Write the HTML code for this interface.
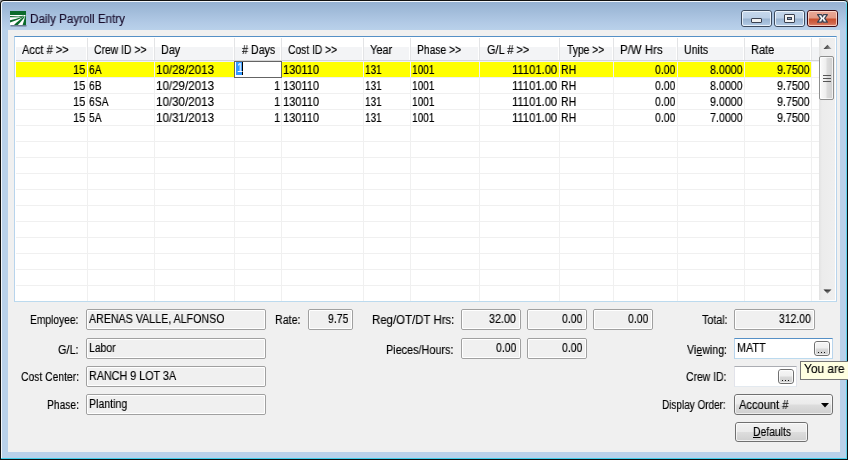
<!DOCTYPE html><html><head><meta charset="utf-8"><style>
*{margin:0;padding:0;box-sizing:border-box}
html,body{width:848px;height:460px;overflow:hidden;background:#a8a8a8}
body{position:relative;font-family:"Liberation Sans",sans-serif;font-size:12px;color:#000}
.a{position:absolute}
.t{position:absolute;white-space:nowrap;line-height:14px;transform-origin:0 0;will-change:transform;-webkit-text-stroke:0.15px currentColor}
</style></head><body>
<div class="a " style="left:0px;top:0px;width:848px;height:460px;background:#101010;border-radius:4px 4px 0 0"></div>
<div class="a " style="left:1px;top:1px;width:846px;height:458px;background:#f2f6fb;border-radius:3px 3px 0 0"></div>
<div class="a " style="left:1px;top:1px;width:846px;height:458px;border-right:1px solid #5fd3ec;border-bottom:1px solid #3fcdea;border-radius:3px 3px 0 0"></div>
<div class="a " style="left:2px;top:2px;width:844px;height:456px;background:linear-gradient(#95b1d3 0px,#a3bddb 10px,#b2cae6 21px,#b9d1ea 28px,#b9d1ea 100%);border-radius:2px 2px 0 0"></div>
<div class="a " style="left:8px;top:30px;width:832px;height:422px;background:#f0f0f0"></div>
<svg class="a" style="left:10px;top:11px" width="17" height="16" viewBox="0 0 17 16">
 <rect x="0.5" y="14" width="16" height="1.5" fill="#4a5a70" opacity=".7"/>
 <rect x="0" y="0" width="16" height="14" fill="#0b6b2b"/>
 <path d="M0 4 H15.6 L12.6 14 H0 Z" fill="#fff"/>
 <path d="M0 5 C3 5 6 5.2 8.5 5.5 L14 4.6 L13 5.4 L8.5 6.3 C6 6.4 3 6.3 0 6.2 Z" fill="#0b6b2b"/>
 <path d="M0 9.2 C4 8.4 8 7 14 4.9 L13.6 5.7 C9 8 5 10 0 11.4 Z" fill="#0b6b2b"/>
 <path d="M4 14 C7 11 10 8.5 14.4 5.2 L14.8 5.8 C12.5 9 10.5 11.5 7.8 14 Z" fill="#0b6b2b"/>
</svg>
<span id="t0" class="t" style="left:30.03px;top:12px;transform:scaleX(0.9691);color:#1a0f2e">Daily Payroll Entry</span>
<div class="a " style="left:741px;top:10px;width:31px;height:17px;border:1px solid #3c4a5e;border-radius:3px;background:linear-gradient(#c5d7eb 0,#bcd0e7 7px,#9ab4d1 8px,#a7c0dc 12px,#b8cfe9 15px)"></div>
<div class="a " style="left:742px;top:11px;width:29px;height:15px;border:1px solid rgba(245,250,255,.8);border-radius:2px"></div>
<div class="a " style="left:774px;top:10px;width:31px;height:17px;border:1px solid #3c4a5e;border-radius:3px;background:linear-gradient(#c5d7eb 0,#bcd0e7 7px,#9ab4d1 8px,#a7c0dc 12px,#b8cfe9 15px)"></div>
<div class="a " style="left:775px;top:11px;width:29px;height:15px;border:1px solid rgba(245,250,255,.8);border-radius:2px"></div>
<div class="a " style="left:807px;top:10px;width:31px;height:17px;border:1px solid #3b0a14;border-radius:3px;background:linear-gradient(#e9a998 0,#e39a86 7px,#c9502f 8px,#cf6449 12px,#e08a74 15px)"></div>
<div class="a " style="left:808px;top:11px;width:29px;height:15px;border:1px solid rgba(255,225,215,.75);border-radius:2px"></div>
<div class="a " style="left:751px;top:18px;width:11px;height:5px;background:#f0f0f0;border:1px solid #3a4150;border-radius:1px"></div>
<div class="a " style="left:784px;top:14px;width:11px;height:9px;background:#f4f4f4;border:1px solid #3a4150;border-radius:1px"></div>
<div class="a " style="left:787px;top:17px;width:5px;height:3px;background:#8aa2c0;border:1px solid #3a4150"></div>
<svg class="a" style="left:816px;top:13px" width="14" height="11" viewBox="0 0 14 11">
<path d="M1.6 1.6 H5.6 L6.5 3.9 L7.4 1.6 H11.4 L8.7 5.4 L11.4 9.2 H7.4 L6.5 6.9 L5.6 9.2 H1.6 L4.3 5.4 Z" fill="#f8f8f8" stroke="#3a4050" stroke-width="1.2" stroke-linejoin="round"/>
</svg>
<div class="a " style="left:14px;top:36px;width:823px;height:266px;background:#fff;border-top:1px solid #5590c6;border-left:1px solid #b8d4ec;border-right:1px solid #b8d4ec;border-bottom:1px solid #bcdaee"></div>
<div class="a " style="left:16px;top:37px;width:803px;height:23px;background:linear-gradient(#fff 0,#fff 10px,#f3f4f6 10px,#f3f4f6 100%)"></div>
<div class="a " style="left:16px;top:60px;width:803px;height:1px;background:#d5d5d5"></div>
<div class="a " style="left:16px;top:61px;width:803px;height:1px;background:#eef0fa"></div>
<div class="a " style="left:16px;top:62px;width:795px;height:15px;background:#ffff00"></div>
<div class="a " style="left:16px;top:77px;width:803px;height:1px;background:#f0f0f0"></div>
<div class="a " style="left:16px;top:93px;width:803px;height:1px;background:#f0f0f0"></div>
<div class="a " style="left:16px;top:109px;width:803px;height:1px;background:#f0f0f0"></div>
<div class="a " style="left:16px;top:125px;width:803px;height:1px;background:#f0f0f0"></div>
<div class="a " style="left:16px;top:141px;width:803px;height:1px;background:#f0f0f0"></div>
<div class="a " style="left:16px;top:157px;width:803px;height:1px;background:#f0f0f0"></div>
<div class="a " style="left:16px;top:173px;width:803px;height:1px;background:#f0f0f0"></div>
<div class="a " style="left:16px;top:189px;width:803px;height:1px;background:#f0f0f0"></div>
<div class="a " style="left:16px;top:205px;width:803px;height:1px;background:#f0f0f0"></div>
<div class="a " style="left:16px;top:221px;width:803px;height:1px;background:#f0f0f0"></div>
<div class="a " style="left:16px;top:237px;width:803px;height:1px;background:#f0f0f0"></div>
<div class="a " style="left:16px;top:253px;width:803px;height:1px;background:#f0f0f0"></div>
<div class="a " style="left:16px;top:269px;width:803px;height:1px;background:#f0f0f0"></div>
<div class="a " style="left:16px;top:285px;width:803px;height:1px;background:#f0f0f0"></div>
<div class="a " style="left:87px;top:62px;width:1px;height:239px;background:#f0f0f0"></div>
<div class="a " style="left:86px;top:38px;width:1px;height:22px;background:#ffffff"></div>
<div class="a " style="left:87px;top:38px;width:1px;height:22px;background:#e3e4e6"></div>
<div class="a " style="left:154px;top:62px;width:1px;height:239px;background:#f0f0f0"></div>
<div class="a " style="left:153px;top:38px;width:1px;height:22px;background:#ffffff"></div>
<div class="a " style="left:154px;top:38px;width:1px;height:22px;background:#e3e4e6"></div>
<div class="a " style="left:234px;top:62px;width:1px;height:239px;background:#f0f0f0"></div>
<div class="a " style="left:233px;top:38px;width:1px;height:22px;background:#ffffff"></div>
<div class="a " style="left:234px;top:38px;width:1px;height:22px;background:#e3e4e6"></div>
<div class="a " style="left:281px;top:62px;width:1px;height:239px;background:#f0f0f0"></div>
<div class="a " style="left:280px;top:38px;width:1px;height:22px;background:#ffffff"></div>
<div class="a " style="left:281px;top:38px;width:1px;height:22px;background:#e3e4e6"></div>
<div class="a " style="left:363px;top:62px;width:1px;height:239px;background:#f0f0f0"></div>
<div class="a " style="left:362px;top:38px;width:1px;height:22px;background:#ffffff"></div>
<div class="a " style="left:363px;top:38px;width:1px;height:22px;background:#e3e4e6"></div>
<div class="a " style="left:410px;top:62px;width:1px;height:239px;background:#f0f0f0"></div>
<div class="a " style="left:409px;top:38px;width:1px;height:22px;background:#ffffff"></div>
<div class="a " style="left:410px;top:38px;width:1px;height:22px;background:#e3e4e6"></div>
<div class="a " style="left:479px;top:62px;width:1px;height:239px;background:#f0f0f0"></div>
<div class="a " style="left:478px;top:38px;width:1px;height:22px;background:#ffffff"></div>
<div class="a " style="left:479px;top:38px;width:1px;height:22px;background:#e3e4e6"></div>
<div class="a " style="left:559px;top:62px;width:1px;height:239px;background:#f0f0f0"></div>
<div class="a " style="left:558px;top:38px;width:1px;height:22px;background:#ffffff"></div>
<div class="a " style="left:559px;top:38px;width:1px;height:22px;background:#e3e4e6"></div>
<div class="a " style="left:613px;top:62px;width:1px;height:239px;background:#f0f0f0"></div>
<div class="a " style="left:612px;top:38px;width:1px;height:22px;background:#ffffff"></div>
<div class="a " style="left:613px;top:38px;width:1px;height:22px;background:#e3e4e6"></div>
<div class="a " style="left:677px;top:62px;width:1px;height:239px;background:#f0f0f0"></div>
<div class="a " style="left:676px;top:38px;width:1px;height:22px;background:#ffffff"></div>
<div class="a " style="left:677px;top:38px;width:1px;height:22px;background:#e3e4e6"></div>
<div class="a " style="left:744px;top:62px;width:1px;height:239px;background:#f0f0f0"></div>
<div class="a " style="left:743px;top:38px;width:1px;height:22px;background:#ffffff"></div>
<div class="a " style="left:744px;top:38px;width:1px;height:22px;background:#e3e4e6"></div>
<div class="a " style="left:811px;top:62px;width:1px;height:239px;background:#f0f0f0"></div>
<div class="a " style="left:810px;top:38px;width:1px;height:22px;background:#ffffff"></div>
<div class="a " style="left:811px;top:38px;width:1px;height:22px;background:#e3e4e6"></div>
<span id="t1" class="t" style="left:22.00px;top:43px;transform:scaleX(0.9200);">Acct # &gt;&gt;</span>
<span id="t2" class="t" style="left:94.14px;top:43px;transform:scaleX(0.8644);">Crew ID &gt;&gt;</span>
<span id="t3" class="t" style="left:161.10px;top:43px;transform:scaleX(0.9000);">Day</span>
<span id="t4" class="t" style="left:242.00px;top:43px;transform:scaleX(0.8919);"># Days</span>
<span id="t5" class="t" style="left:288.14px;top:43px;transform:scaleX(0.8571);">Cost ID &gt;&gt;</span>
<span id="t6" class="t" style="left:370.00px;top:43px;transform:scaleX(0.9167);">Year</span>
<span id="t7" class="t" style="left:417.14px;top:43px;transform:scaleX(0.8600);">Phase &gt;&gt;</span>
<span id="t8" class="t" style="left:487.00px;top:43px;transform:scaleX(0.9130);">G/L # &gt;&gt;</span>
<span id="t9" class="t" style="left:567.00px;top:43px;transform:scaleX(0.8605);">Type &gt;&gt;</span>
<span id="t10" class="t" style="left:620.05px;top:43px;transform:scaleX(0.9535);">P/W Hrs</span>
<span id="t11" class="t" style="left:684.12px;top:43px;transform:scaleX(0.8846);">Units</span>
<span id="t12" class="t" style="left:751.08px;top:43px;transform:scaleX(0.9167);">Rate</span>
<span id="t13" class="t" style="left:73.08px;top:63px;transform:scaleX(0.9167);">15</span>
<span id="t14" class="t" style="left:73.08px;top:79px;transform:scaleX(0.9167);">15</span>
<span id="t15" class="t" style="left:73.08px;top:95px;transform:scaleX(0.9167);">15</span>
<span id="t16" class="t" style="left:73.08px;top:111px;transform:scaleX(0.9167);">15</span>
<span id="t17" class="t" style="left:89.14px;top:63px;transform:scaleX(0.8571);">6A</span>
<span id="t18" class="t" style="left:89.14px;top:79px;transform:scaleX(0.8571);">6B</span>
<span id="t19" class="t" style="left:89.14px;top:95px;transform:scaleX(0.8571);">6SA</span>
<span id="t20" class="t" style="left:89.14px;top:111px;transform:scaleX(0.8571);">5A</span>
<span id="t21" class="t" style="left:156.03px;top:63px;transform:scaleX(0.9661);">10/28/2013</span>
<span id="t22" class="t" style="left:156.03px;top:79px;transform:scaleX(0.9661);">10/29/2013</span>
<span id="t23" class="t" style="left:156.03px;top:95px;transform:scaleX(0.9661);">10/30/2013</span>
<span id="t24" class="t" style="left:156.03px;top:111px;transform:scaleX(0.9661);">10/31/2013</span>
<span id="t25" class="t" style="left:273.50px;top:79px;transform:scaleX(0.9167);">1</span>
<span id="t26" class="t" style="left:273.50px;top:95px;transform:scaleX(0.9167);">1</span>
<span id="t27" class="t" style="left:273.50px;top:111px;transform:scaleX(0.9167);">1</span>
<span id="t28" class="t" style="left:283.08px;top:63px;transform:scaleX(0.9211);">130110</span>
<span id="t29" class="t" style="left:283.08px;top:79px;transform:scaleX(0.9211);">130110</span>
<span id="t30" class="t" style="left:283.08px;top:95px;transform:scaleX(0.9211);">130110</span>
<span id="t31" class="t" style="left:283.08px;top:111px;transform:scaleX(0.9211);">130110</span>
<span id="t32" class="t" style="left:365.17px;top:63px;transform:scaleX(0.8333);">131</span>
<span id="t33" class="t" style="left:365.17px;top:79px;transform:scaleX(0.8333);">131</span>
<span id="t34" class="t" style="left:365.17px;top:95px;transform:scaleX(0.8333);">131</span>
<span id="t35" class="t" style="left:365.17px;top:111px;transform:scaleX(0.8333);">131</span>
<span id="t36" class="t" style="left:412.16px;top:63px;transform:scaleX(0.8400);">1001</span>
<span id="t37" class="t" style="left:412.16px;top:79px;transform:scaleX(0.8400);">1001</span>
<span id="t38" class="t" style="left:412.16px;top:95px;transform:scaleX(0.8400);">1001</span>
<span id="t39" class="t" style="left:412.16px;top:111px;transform:scaleX(0.8400);">1001</span>
<span id="t40" class="t" style="left:512.06px;top:63px;transform:scaleX(0.9362);">11101.00</span>
<span id="t41" class="t" style="left:512.06px;top:79px;transform:scaleX(0.9362);">11101.00</span>
<span id="t42" class="t" style="left:512.06px;top:95px;transform:scaleX(0.9362);">11101.00</span>
<span id="t43" class="t" style="left:512.06px;top:111px;transform:scaleX(0.9362);">11101.00</span>
<span id="t44" class="t" style="left:561.12px;top:63px;transform:scaleX(0.8750);">RH</span>
<span id="t45" class="t" style="left:561.12px;top:79px;transform:scaleX(0.8750);">RH</span>
<span id="t46" class="t" style="left:561.12px;top:95px;transform:scaleX(0.8750);">RH</span>
<span id="t47" class="t" style="left:561.12px;top:111px;transform:scaleX(0.8750);">RH</span>
<span id="t48" class="t" style="left:655.00px;top:63px;transform:scaleX(0.8696);">0.00</span>
<span id="t49" class="t" style="left:655.00px;top:79px;transform:scaleX(0.8696);">0.00</span>
<span id="t50" class="t" style="left:655.00px;top:95px;transform:scaleX(0.8696);">0.00</span>
<span id="t51" class="t" style="left:655.00px;top:111px;transform:scaleX(0.8696);">0.00</span>
<span id="t52" class="t" style="left:710.00px;top:63px;transform:scaleX(0.8889);">8.0000</span>
<span id="t53" class="t" style="left:710.00px;top:79px;transform:scaleX(0.8889);">8.0000</span>
<span id="t54" class="t" style="left:710.00px;top:95px;transform:scaleX(0.8889);">9.0000</span>
<span id="t55" class="t" style="left:710.00px;top:111px;transform:scaleX(0.8889);">7.0000</span>
<span id="t56" class="t" style="left:777.00px;top:63px;transform:scaleX(0.8889);">9.7500</span>
<span id="t57" class="t" style="left:777.00px;top:79px;transform:scaleX(0.8889);">9.7500</span>
<span id="t58" class="t" style="left:777.00px;top:95px;transform:scaleX(0.8889);">9.7500</span>
<span id="t59" class="t" style="left:777.00px;top:111px;transform:scaleX(0.8889);">9.7500</span>
<div class="a " style="left:234px;top:61px;width:48px;height:17px;background:#fff;border:1px solid #646464"></div>
<div class="a " style="left:236px;top:62px;width:6px;height:13px;background:#3399ff"></div>
<div class="a " style="left:242px;top:62px;width:1px;height:13px;background:#000"></div>
<span class="t" style="left:236.5px;top:61px;color:#fff;transform:scaleX(0.9)">1</span>
<div class="a " style="left:819px;top:38px;width:16px;height:262px;background:linear-gradient(90deg,#e2e2e2 0,#ececec 3px,#efefef 100%)"></div>
<svg class="a" style="left:823px;top:44px" width="9" height="6" viewBox="0 0 9 6"><defs><linearGradient id="ag" x1="0" x2="1" y1="0" y2="0.3"><stop offset="0" stop-color="#101010"/><stop offset="1" stop-color="#9a9a9a"/></linearGradient></defs><path d="M0.5 5 L4.5 0.8 L8.5 5 Z" fill="url(#ag)"/></svg>
<svg class="a" style="left:823px;top:289px" width="9" height="6" viewBox="0 0 9 6"><defs><linearGradient id="ag2" x1="0" x2="0.3" y1="0" y2="1"><stop offset="0" stop-color="#101010"/><stop offset="1" stop-color="#9a9a9a"/></linearGradient></defs><path d="M0.5 0.5 L8.5 0.5 L4.5 4.8 Z" fill="url(#ag2)"/></svg>
<div class="a " style="left:819px;top:56px;width:15px;height:44px;border:1px solid #8e8f8f;border-radius:2px;background:linear-gradient(90deg,#fbfbfb 0,#eeeeee 45%,#dcdcdc 55%,#cfcfcf 100%)"></div>
<div class="a " style="left:820px;top:57px;width:13px;height:42px;border:1px solid rgba(255,255,255,.7);border-radius:1px"></div>
<div class="a " style="left:823px;top:75px;width:8px;height:1px;background:#555"></div>
<div class="a " style="left:823px;top:78px;width:8px;height:1px;background:#555"></div>
<div class="a " style="left:823px;top:81px;width:8px;height:1px;background:#555"></div>
<div class="a " style="left:86px;top:309px;width:180px;height:21px;border:1px solid #a0a0a0;border-radius:2px;background:#f0f0f0"></div>
<div class="a " style="left:87px;top:310px;width:178px;height:19px;border:1px solid #ffffff;border-radius:1px"></div>
<div class="a " style="left:86px;top:338px;width:180px;height:21px;border:1px solid #a0a0a0;border-radius:2px;background:#f0f0f0"></div>
<div class="a " style="left:87px;top:339px;width:178px;height:19px;border:1px solid #ffffff;border-radius:1px"></div>
<div class="a " style="left:86px;top:366px;width:180px;height:21px;border:1px solid #a0a0a0;border-radius:2px;background:#f0f0f0"></div>
<div class="a " style="left:87px;top:367px;width:178px;height:19px;border:1px solid #ffffff;border-radius:1px"></div>
<div class="a " style="left:86px;top:394px;width:180px;height:21px;border:1px solid #a0a0a0;border-radius:2px;background:#f0f0f0"></div>
<div class="a " style="left:87px;top:395px;width:178px;height:19px;border:1px solid #ffffff;border-radius:1px"></div>
<span id="t60" class="t" style="left:30.15px;top:313px;transform:scaleX(0.8545);">Employee:</span>
<span id="t61" class="t" style="left:89.00px;top:312px;transform:scaleX(0.8882);">ARENAS VALLE, ALFONSO</span>
<span id="t62" class="t" style="left:58.00px;top:343px;transform:scaleX(0.9091);">G/L:</span>
<span id="t63" class="t" style="left:89.13px;top:341px;transform:scaleX(0.8667);">Labor</span>
<span id="t64" class="t" style="left:21.14px;top:370px;transform:scaleX(0.8615);">Cost Center:</span>
<span id="t65" class="t" style="left:89.10px;top:369px;transform:scaleX(0.8958);">RANCH 9 LOT 3A</span>
<span id="t66" class="t" style="left:47.14px;top:398px;transform:scaleX(0.8571);">Phase:</span>
<span id="t67" class="t" style="left:89.12px;top:397px;transform:scaleX(0.8810);">Planting</span>
<div class="a " style="left:308px;top:309px;width:45px;height:21px;border:1px solid #a0a0a0;border-radius:2px;background:#f0f0f0"></div>
<div class="a " style="left:309px;top:310px;width:43px;height:19px;border:1px solid #ffffff;border-radius:1px"></div>
<span id="t68" class="t" style="left:275.11px;top:313px;transform:scaleX(0.8889);">Rate:</span>
<span id="t69" class="t" style="left:328.00px;top:312px;transform:scaleX(0.8696);">9.75</span>
<div class="a " style="left:461px;top:309px;width:60px;height:21px;border:1px solid #a0a0a0;border-radius:2px;background:#f0f0f0"></div>
<div class="a " style="left:462px;top:310px;width:58px;height:19px;border:1px solid #ffffff;border-radius:1px"></div>
<div class="a " style="left:527px;top:309px;width:60px;height:21px;border:1px solid #a0a0a0;border-radius:2px;background:#f0f0f0"></div>
<div class="a " style="left:528px;top:310px;width:58px;height:19px;border:1px solid #ffffff;border-radius:1px"></div>
<div class="a " style="left:593px;top:309px;width:60px;height:21px;border:1px solid #a0a0a0;border-radius:2px;background:#f0f0f0"></div>
<div class="a " style="left:594px;top:310px;width:58px;height:19px;border:1px solid #ffffff;border-radius:1px"></div>
<div class="a " style="left:461px;top:338px;width:60px;height:21px;border:1px solid #a0a0a0;border-radius:2px;background:#f0f0f0"></div>
<div class="a " style="left:462px;top:339px;width:58px;height:19px;border:1px solid #ffffff;border-radius:1px"></div>
<div class="a " style="left:527px;top:338px;width:60px;height:21px;border:1px solid #a0a0a0;border-radius:2px;background:#f0f0f0"></div>
<div class="a " style="left:528px;top:339px;width:58px;height:19px;border:1px solid #ffffff;border-radius:1px"></div>
<span id="t70" class="t" style="left:372.05px;top:313px;transform:scaleX(0.9524);">Reg/OT/DT Hrs:</span>
<span id="t71" class="t" style="left:386.10px;top:343px;transform:scaleX(0.9041);">Pieces/Hours:</span>
<span id="t72" class="t" style="left:489.10px;top:312px;transform:scaleX(0.8966);">32.00</span>
<span id="t73" class="t" style="left:562.00px;top:312px;transform:scaleX(0.8696);">0.00</span>
<span id="t74" class="t" style="left:628.00px;top:312px;transform:scaleX(0.8696);">0.00</span>
<span id="t75" class="t" style="left:496.00px;top:341px;transform:scaleX(0.8696);">0.00</span>
<span id="t76" class="t" style="left:562.00px;top:341px;transform:scaleX(0.8696);">0.00</span>
<div class="a " style="left:734px;top:309px;width:81px;height:21px;border:1px solid #a0a0a0;border-radius:2px;background:#f0f0f0"></div>
<div class="a " style="left:735px;top:310px;width:79px;height:19px;border:1px solid #ffffff;border-radius:1px"></div>
<span id="t77" class="t" style="left:702.00px;top:313px;transform:scaleX(0.8929);">Total:</span>
<span id="t78" class="t" style="left:778.70px;top:312px;transform:scaleX(0.8696);">312.00</span>
<div class="a " style="left:734px;top:338px;width:99px;height:21px;background:#fff;border-top:1px solid #5590c6;border-left:1px solid #b8d4ec;border-right:1px solid #b8d4ec;border-bottom:1px solid #bcdaee"></div>
<span id="t79" class="t" style="left:687.00px;top:343px;transform:scaleX(0.8864);">Vi<u>e</u>wing:</span>
<span id="t80" class="t" style="left:737.10px;top:341px;transform:scaleX(0.9032);">MATT</span>
<div class="a " style="left:734px;top:366px;width:63px;height:21px;background:#fff;border-top:1px solid #abadb3;border-left:1px solid #e2e3ea;border-right:1px solid #e2e3ea;border-bottom:1px solid #e3e9ef"></div>
<span id="t81" class="t" style="left:686.13px;top:370px;transform:scaleX(0.8667);">Crew ID:</span>
<div class="a " style="left:814px;top:341px;width:16px;height:15px;border:1px solid #707070;border-radius:3px;background:linear-gradient(#f6f6f6 0,#eeeeee 48%,#dadada 52%,#cdcdcd 100%)"></div>
<div class="a " style="left:815px;top:342px;width:14px;height:13px;border:1px solid rgba(255,255,255,.7);border-radius:2px"></div>
<div class="a " style="left:818px;top:352px;width:1px;height:1px;background:#101010"></div>
<div class="a " style="left:821px;top:352px;width:1px;height:1px;background:#101010"></div>
<div class="a " style="left:824px;top:352px;width:1px;height:1px;background:#101010"></div>
<div class="a " style="left:778px;top:369px;width:16px;height:15px;border:1px solid #707070;border-radius:3px;background:linear-gradient(#f6f6f6 0,#eeeeee 48%,#dadada 52%,#cdcdcd 100%)"></div>
<div class="a " style="left:779px;top:370px;width:14px;height:13px;border:1px solid rgba(255,255,255,.7);border-radius:2px"></div>
<div class="a " style="left:782px;top:380px;width:1px;height:1px;background:#101010"></div>
<div class="a " style="left:785px;top:380px;width:1px;height:1px;background:#101010"></div>
<div class="a " style="left:788px;top:380px;width:1px;height:1px;background:#101010"></div>
<span id="t82" class="t" style="left:662.17px;top:398px;transform:scaleX(0.8312);">Display Order:</span>
<div class="a " style="left:734px;top:394px;width:99px;height:21px;border:1px solid #707070;border-radius:3px;background:linear-gradient(#f2f2f2 0,#ebebeb 48%,#dddddd 52%,#cfcfcf 100%)"></div>
<div class="a " style="left:735px;top:395px;width:97px;height:19px;border:1px solid rgba(255,255,255,.6);border-radius:2px"></div>
<span id="t83" class="t" style="left:738.93px;top:398px;transform:scaleX(0.9259);">Account #</span>
<svg class="a" style="left:821px;top:403px" width="8" height="5" viewBox="0 0 8 5"><path d="M0 0 L8 0 L4 4.5 Z" fill="#000"/></svg>
<div class="a " style="left:735px;top:422px;width:73px;height:20px;border:1px solid #707070;border-radius:3px;background:linear-gradient(#f2f2f2 0,#ebebeb 48%,#dddddd 52%,#cfcfcf 100%)"></div>
<div class="a " style="left:736px;top:423px;width:71px;height:18px;border:1px solid rgba(255,255,255,.7);border-radius:2px"></div>
<span id="t84" class="t" style="left:753.00px;top:425px;transform:scaleX(0.8636);"><u>D</u>efaults</span>
<div class="a " style="left:800px;top:361px;width:60px;height:19px;background:#ffffe1;border:1px solid #767676"></div>
<span id="t85" class="t" style="left:804.00px;top:362px;transform:scaleX(0.9900);">You are logged</span>
</body></html>
